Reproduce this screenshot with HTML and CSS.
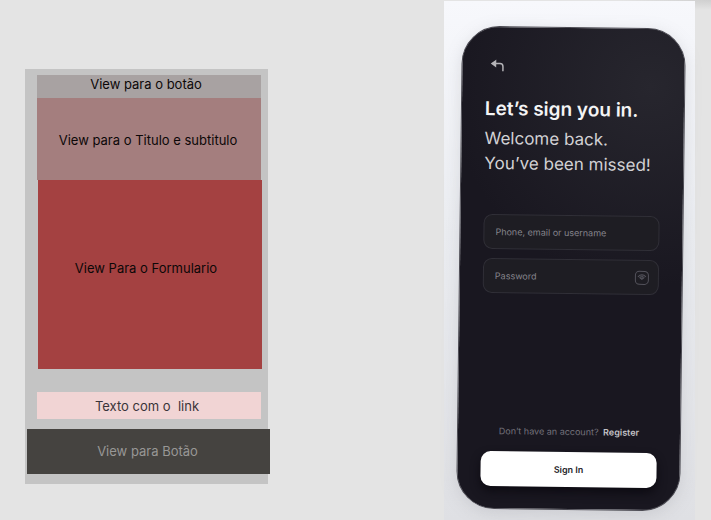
FILE: index.html
```html
<!DOCTYPE html>
<html lang="pt">
<head>
<meta charset="utf-8">
<title>Login wireframe</title>
<link rel="stylesheet" href="styles.css">
</head>
<body>
<main class="canvas">
  <section class="wireframe">
    <div class="block block-back">View para o botão</div>
    <div class="block block-title">View para o Titulo e subtitulo</div>
    <div class="block block-form">View Para o Formulario</div>
    <div class="block block-link">Texto com o &nbsp;link</div>
    <div class="block block-button">View para Botão</div>
  </section>
  <section class="mockup">
    <form class="phone">
      <button class="back" type="button" aria-label="Back">
        <svg viewBox="0 0 14 14" width="14" height="14"><path class="head" d="M5 2 1.500 4.500 5 7z"/><path d="M2 4.500H9.500Q12.500 4.500 12.500 7.500V12"/></svg>
      </button>
      <h1>Let’s sign you in.</h1>
      <p class="subtitle">Welcome back.<br>You’ve been missed!</p>
      <div class="field"><input type="text" aria-label="Phone, email or username" placeholder="Phone, email or username"></div>
      <div class="field">
        <input type="password" aria-label="Password" placeholder="Password">
        <svg class="reveal" viewBox="0 0 16 16" width="16" height="16"><rect x="1.500" y="1.500" width="13" height="13" rx="4"/><path d="M4 7Q8 3 12 7M5.500 7.500 8 9.500 10.500 7.500"/><circle cx="8" cy="7.300" r="1.200"/></svg>
      </div>
      <p class="register">Don’t have an account? <a href="#register">Register</a></p>
      <button class="submit" type="submit">Sign In</button>
    </form>
  </section>
</main>
</body>
</html>
```
FILE: styles.css
```css
* {
  box-sizing: border-box;
}

body {
  margin: 0;
  background: #e4e4e4;
  font-family: Inter, "Liberation Sans", sans-serif;
}

.canvas {
  display: flex;
  justify-content: space-between;
  align-items: flex-start;
  min-height: 100vh;
  padding: 1px 16px 0 25px;
  overflow: hidden;
  background: radial-gradient(ellipse 90px 10px at 100% 0, #cfcfcf, transparent);
}

.wireframe {
  display: flex;
  flex-direction: column;
  width: 243px;
  margin-top: 68px;
  padding: 6px 7px 10px 12px;
  background: #c4c4c4;
  font-size: 13px;
  line-height: 16px;
  color: #0c0808;
}

.block {
  display: flex;
  justify-content: center;
  align-items: center;
  padding-right: 2px;
}

.block-back {
  height: 23px;
  padding-bottom: 6px;
  padding-right: 6px;
  background: #a8a2a2;
}

.block-title {
  height: 82px;
  padding-top: 2px;
  background: #a47e7e;
}

.block-form {
  height: 189px;
  margin: 0 -1px 0 1px;
  padding-right: 8px;
  padding-bottom: 14px;
  background: #a44141;
}

.block-link {
  height: 27px;
  margin-top: 23px;
  padding-right: 4px;
  background: #f1d4d4;
  color: #3a3439;
}

.block-button {
  height: 45px;
  margin: 10px -9px 0 -10px;
  padding-bottom: 2px;
  background: #454340;
  color: #989796;
}

.mockup {
  width: 251px;
  min-height: calc(100vh - 1px);
  padding: 26px 12px 10px 15px;
  background: linear-gradient(#f7f8fc, #ebedf1 45%, #dfe0e4);
}

.phone {
  display: flex;
  flex-direction: column;
  min-height: 483px;
  padding: 32px 23px 22px;
  border: 1px solid #4c4b53;
  border-radius: 38px;
  background: radial-gradient(circle at 85% 12%, #27262e, #191720 200px);
  box-shadow: 0 4px 16px #8f909640;
  transform: rotate(0.7deg);
}

.back {
  align-self: flex-start;
  height: 14px;
  margin-left: 5px;
  padding: 0;
  border: 0;
  background: none;
}

.back svg {
  display: block;
  fill: none;
  stroke: #b4b3b7;
  stroke-width: 1.5;
}

.back .head {
  fill: #cfcfd1;
}

h1 {
  margin: 24px 0 5px;
  font-size: 19px;
  font-weight: 600;
  line-height: 24px;
  white-space: nowrap;
  color: #f4f4f5;
}

.subtitle {
  margin: 0 0 38px;
  font-size: 17px;
  line-height: 25px;
  white-space: nowrap;
  color: #d2d1d4;
}

.field {
  display: flex;
  align-items: center;
  height: 35px;
  margin-bottom: 9px;
  padding: 0 8px 0 11px;
  border: 1px solid #302f37;
  border-radius: 9px;
  background: #1e1d23;
}

.field input {
  flex: 1;
  min-width: 0;
  padding: 0;
  border: 0;
  background: none;
  font: 9px Inter, sans-serif;
  color: #8b8a92;
}

.field input::placeholder {
  color: #85848c;
}

.reveal {
  fill: none;
  stroke: #54535c;
}

.register {
  margin: auto 0 13px;
  font-size: 9px;
  line-height: 14px;
  text-align: center;
  white-space: nowrap;
  color: #74727b;
}

.register a {
  margin-left: 2px;
  font-weight: 600;
  color: #c3c2c6;
  text-decoration: none;
}

.submit {
  height: 35px;
  padding: 0;
  border: 0;
  border-radius: 10px;
  background: #fff;
  box-shadow: 0 5px 10px #0d0b12;
  font: 600 9px Inter, sans-serif;
  color: #25242a;
}
```
